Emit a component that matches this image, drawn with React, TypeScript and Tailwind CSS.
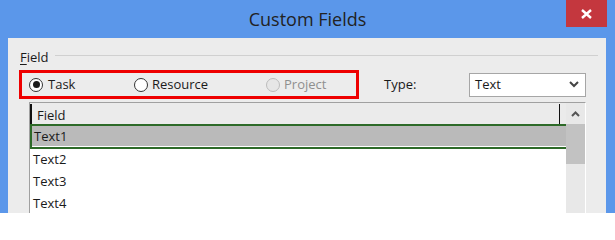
const font = { fontFamily: '"Segoe UI", "Open Sans", "Noto Sans", sans-serif' }

const Radio = ({ checked, disabled }: { checked?: boolean; disabled?: boolean }) => (
  <span
    className={
      'flex h-[14px] w-[14px] items-center justify-center rounded-full border ' +
      (disabled ? 'border-[#bcbcbc] bg-[#e6e6e6]' : 'border-[#333333] bg-white')
    }
  >
    {checked && <span className="h-[7px] w-[7px] rounded-full bg-[#1a1a1a]" />}
  </span>
)

const rows = ['Text2', 'Text3', 'Text4']

export default function App() {
  return (
    <div className="flex h-[213px] w-[615px] flex-col overflow-hidden bg-[#5b97ea]" style={font}>
      {/* Title bar */}
      <div className="flex h-[38px] shrink-0 items-start">
        <div className="w-[49px]" />
        <div className="flex h-[39px] flex-1 items-center justify-center text-[18px] text-[#222222]">
          Custom Fields
        </div>
        <div className="mr-[8px] flex h-[27px] w-[41px] items-center justify-center bg-[#c4373e]">
          <svg width="11" height="10" viewBox="0 0 11 10">
            <path d="M1 1 L10 9 M10 1 L1 9" stroke="white" strokeWidth="2.4" />
          </svg>
        </div>
      </div>

      {/* Client area */}
      <div className="ml-[8px] mr-[9px] flex-1 bg-[#ececec] pt-[11px] text-[13px] text-[#1a1a1a]">
        <div className="flex h-[16px] items-center pl-[12px]">
          <span className="leading-none">
            <span className="underline underline-offset-2">F</span>ield
          </span>
          <div className="ml-[6px] mr-[8px] mb-[3px] h-px flex-1 bg-[#d0d0d0]" />
        </div>

        <div className="mt-[5px] flex items-center">
          <div className="ml-[11px] flex h-[29px] w-[340px] items-center border-[3px] border-[#ee0000] pl-[7px]">
            <div className="flex w-[105px] items-center gap-[5px]">
              <Radio checked />
              <span>Task</span>
            </div>
            <div className="flex w-[132px] items-center gap-[4px]">
              <Radio />
              <span>Resource</span>
            </div>
            <div className="flex items-center gap-[4px]">
              <Radio disabled />
              <span className="text-[#8f8f8f]">Project</span>
            </div>
          </div>
          <span className="ml-[25px] w-[85px]">Type:</span>
          <div className="flex h-[24px] w-[117px] items-center justify-between border border-[#a6a6a6] bg-white pl-[5px] pr-[6px]">
            <span>Text</span>
            <svg width="10" height="7" viewBox="0 0 10 7">
              <path d="M1 1 L5 5 L9 1" stroke="#444" strokeWidth="2" fill="none" />
            </svg>
          </div>
        </div>

        {/* Field list */}
        <div className="ml-[21px] mt-[3px] flex w-[557px] border-l border-t border-r border-l-[#a0a0a0] border-t-[#a0a0a0] border-r-white">
          <div className="flex flex-1 flex-col">
            <div className="flex h-[21px] items-end bg-[#ebebeb]">
              <div className="flex h-[20px] flex-1 items-end border-l-2 border-r border-[#111] pl-[5px] leading-[18px]">
                Field
              </div>
              <div className="w-[6px]" />
            </div>
            <div className="flex h-[25px] flex-col border-l-2 border-t-2 border-[#2d6a28] bg-white">
              <div className="flex h-[20px] items-center bg-[#bababa] pl-[2px] pt-px">Text1</div>
              <div className="h-px bg-white" />
              <div className="h-[2px] bg-[#2d6a28]" />
            </div>
            <div className="bg-white">
              {rows.map((r) => (
                <div key={r} className="flex h-[22px] items-center pl-[3px] pb-px">
                  {r}
                </div>
              ))}
            </div>
          </div>
          <div className="flex w-[19px] flex-col bg-[#e8e8e8]">
            <div className="flex h-[21px] items-center justify-center">
              <svg width="9" height="6" viewBox="0 0 9 6">
                <path d="M1 5 L4.5 1.5 L8 5" stroke="#555" strokeWidth="2" fill="none" />
              </svg>
            </div>
            <div className="h-[40px] bg-[#c2c2c2]" />
          </div>
        </div>
      </div>
    </div>
  )
}
